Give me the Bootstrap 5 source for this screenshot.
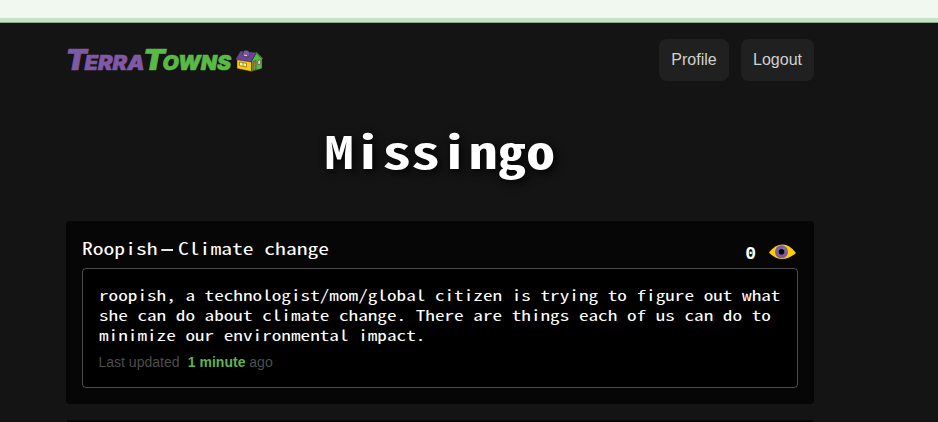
<!DOCTYPE html>
<html lang="en">
<head>
<meta charset="utf-8">
<meta name="viewport" content="width=device-width, initial-scale=1">
<title>TerraTowns</title>
<link href="https://cdn.jsdelivr.net/npm/bootstrap@5.3.0/dist/css/bootstrap.min.css" rel="stylesheet">
<style>
body { background: #141414; color: #fff; font-family: "Liberation Sans", Arial, sans-serif; line-height: normal; height: 422px; overflow: hidden; }
.browser-strip { height: 22px; background: #f0f8f0; border-bottom: 4px solid #c3e1c3; }
.browser-edge { height: 1px; background: #8fa58f; }
.page-wrap { width: 748px; height: 399px; margin-left: 66px; overflow: hidden; }
.site-bar { height: 42px; margin-top: 16px; }
.nav-pill { width: 73px; height: 42px; border-radius: 8px; background: #202020; color: #d0d0d0; font-size: 16px; line-height: 41px; text-align: center; text-decoration: none; }
.nav-pill.first { width: 70px; }
.mono { font-family: "Noto Sans Mono CJK JP", "Noto Sans Mono CJK SC", "Liberation Mono", monospace; transform: scaleX(1.3); transform-origin: 0 0; }
.town-name { font-size: 44.3px; font-weight: 700; line-height: 60px; height: 60px; margin: 39px 0 41px; text-shadow: 2px 3px 8px #000; transform-origin: 50% 0; }
.home-card { background: #060606; border-radius: 4px; padding: 0 16px; height: 183px; margin-bottom: 16px; }
.home-head { height: 47px; }
.home-title { font-size: 16.6px; line-height: 24px; margin-top: 15px; white-space: pre; }
.dash { width: 15.8px; display: inline-block; text-align: center; }
.dash i { display: inline-block; width: 9px; height: 2px; background: #e8e8e8; vertical-align: 4px; }
.views { font-family: "Liberation Mono", monospace; font-size: 18px; line-height: 24px; font-weight: 700; margin-top: 21px; }
.home-box { background: #000; border: 1px solid #4c4c4c; border-radius: 4px; height: 120px; padding: 16px 0 0 15.5px; }
.home-text { font-size: 14.77px; line-height: 20px; width: 527px; margin: 0 0 9px; }
.updated { font-size: 14px; line-height: 16px; color: #4d4d4d; }
.updated b { color: #62b14e; margin-left: 4.5px; }
.logo-text { font-family: Inter, "Liberation Sans", sans-serif; font-weight: 900; font-style: italic; }
</style>
</head>
<body>
<div class="browser-strip"></div><div class="browser-edge"></div>
<div class="page-wrap">
  <header class="site-bar d-flex justify-content-between">
    <svg class="d-block" width="200" height="42" viewBox="66 39 200 42" role="img" aria-label="TerraTowns">
      <g class="logo-text" stroke-width=".6" stroke-linejoin="round">
        <g fill="#8059a6" stroke="#8059a6">
          <text x="65.500" y="70" font-size="28.500" textLength="21.500" lengthAdjust="spacingAndGlyphs">T</text>
          <text x="84.500" y="70" font-size="19.500" textLength="60" lengthAdjust="spacingAndGlyphs">ERRA</text>
        </g>
        <g fill="#5bba47" stroke="#5bba47">
          <text x="143" y="70" font-size="28.500" textLength="22" lengthAdjust="spacingAndGlyphs">T</text>
          <text x="162.500" y="70" font-size="19.500" textLength="68.500" lengthAdjust="spacingAndGlyphs">OWNS</text>
        </g>
      </g>
      <g stroke="#2a1c30" stroke-width=".45" stroke-linejoin="round">
        <path d="M237 58.500 251.500 60.500V71.500L237 68.500z" fill="#fc0"/>
        <path d="M251.500 61 256 53l6 5.500v10L251.500 71.500z" fill="#5bba47"/>
        <path d="M235.500 59.500 240.500 51 256.500 52.500 251 62z" fill="#65459a"/>
        <path d="M256 52.500 262.500 59" stroke="#438836" stroke-width="1.500"/>
        <path d="M242.500 54l2-3.800 3.500.3 2 3.200-1.500 3.500-5-1.200z" fill="#8059a6"/>
        <path d="M243.700 54l3.700.7v1.900l-3.700-.7z" fill="#f5e2a0"/>
        <path d="M239.500 62l7 1.500v3.500l-7-1.500z" fill="#fff0b0"/><path d="M243 62.800v3.500"/>
        <path d="M253 61.500l3-1v9.200l-3 1z" fill="#b77845"/>
        <path d="M258 60.500l2.200-.6v4.200l-2.200.6z" fill="#fff0b0"/>
      </g>
    </svg>
    <nav class="d-flex">
      <a class="nav-pill first me-2" href="#">Profile</a>
      <a class="nav-pill ms-1" href="#">Logout</a>
    </nav>
  </header>
  <h1 class="town-name mono text-center">Missingo</h1>
  <article class="home-card">
    <div class="home-head d-flex justify-content-between">
      <div class="home-title mono">Roopish<span class="dash"><i></i></span>Climate change</div>
      <div class="d-flex">
        <span class="views">0</span>
        <svg class="ms-2" width="34" height="47" viewBox="764 221 34 47" aria-hidden="true">
          <path d="M769 252.500Q775 244.500 782.500 244.500T796 253Q789 259 782 259T769 252.500z" fill="#fc0"/>
          <circle cx="781.500" cy="251.800" r="6.500" fill="#8059a6"/>
          <circle cx="781.500" cy="251.800" r="2.800" fill="#000"/>
          <circle cx="784" cy="248.500" r="1" fill="#5e9e70"/><circle cx="786" cy="251" r=".7" fill="#5e9e70"/>
        </svg>
      </div>
    </div>
    <div class="home-box">
      <p class="home-text mono">roopish, a technologist/mom/global citizen is trying to figure out what she can do about climate change. There are things each of us can do to minimize our environmental impact.</p>
      <div class="updated">Last updated <b>1 minute</b> ago</div>
    </div>
  </article>
  <article class="home-card"></article>
</div>
<script src="https://cdn.jsdelivr.net/npm/bootstrap@5.3.0/dist/js/bootstrap.bundle.min.js"></script>
</body>
</html>
